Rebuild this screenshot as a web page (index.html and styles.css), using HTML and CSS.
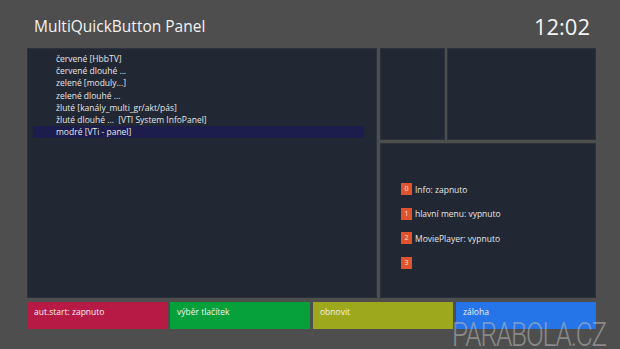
FILE: index.html
```html
<!DOCTYPE html>
<html lang="cs">
<head>
    <meta charset="UTF-8">
    <title>MultiQuickButton Panel</title>
    <link rel="stylesheet" href="styles.css">
</head>
<body>
    <div class="screen">
        <div class="header">
            <div class="title">MultiQuickButton Panel</div>
            <div class="clock">12:02</div>
        </div>

        <div class="main">
            <div class="panel list-panel">
                <div class="item">červené [HbbTV]</div>
                <div class="item">červené dlouhé ...</div>
                <div class="item">zelené [moduly...]</div>
                <div class="item">zelené dlouhé ...</div>
                <div class="item">žluté [kanály_multi_gr/akt/pás]</div>
                <div class="item">žluté dlouhé ...&nbsp; [VTI System InfoPanel]</div>
                <div class="item selected">modré [VTi - panel]</div>
            </div>

            <div class="side">
                <div class="side-top">
                    <div class="panel"></div>
                    <div class="panel"></div>
                </div>
                <div class="panel info-panel">
                    <div class="info-row"><span class="badge">0</span>Info: zapnuto</div>
                    <div class="info-row"><span class="badge">1</span>hlavní menu: vypnuto</div>
                    <div class="info-row"><span class="badge">2</span>MoviePlayer: vypnuto</div>
                    <div class="info-row"><span class="badge">3</span></div>
                </div>
            </div>
        </div>

        <div class="buttons">
            <div class="btn red">aut.start: zapnuto</div>
            <div class="btn green">výběr tlačítek</div>
            <div class="btn yellow">obnovit</div>
            <div class="btn blue">záloha</div>
        </div>

        <div class="watermark">PARABOLA.CZ</div>
    </div>
</body>
</html>
```

FILE: styles.css
```css
body {
    margin: 0;
    background-color: #4e4e4e;
    font-family: "Open Sans", "DejaVu Sans", sans-serif;
    color: #e6e6e6;
}

.screen {
    position: relative;
    width: 620px;
    height: 349px;
    padding: 0 24px 0 27px;
    box-sizing: border-box;
    overflow: hidden;
}

.header {
    height: 48px;
    display: flex;
    justify-content: space-between;
    align-items: center;
    padding: 3px 6px 0 7px;
    box-sizing: border-box;
}

.title {
    font-size: 15.5px;
    color: #f2f2f2;
}

.clock {
    font-size: 22px;
    color: #f4f4f4;
}

.main {
    display: grid;
    grid-template-columns: 350px 1fr;
    gap: 3px;
    height: 250px;
}

.panel {
    background-color: #212733;
    box-shadow: inset 0 0 0 1px #2b313d;
}

.list-panel {
    padding-top: 5px;
}

.item {
    font-size: 8.5px;
    line-height: 12.2px;
    padding-left: 29px;
}

.item.selected {
    margin: 0 13px 0 6px;
    padding-left: 23px;
    background-color: #1c1d4c;
}

.side {
    display: grid;
    grid-template-rows: 92px 1fr;
    gap: 3px;
}

.side-top {
    display: grid;
    grid-template-columns: 65px 1fr;
    gap: 2px;
}

.info-panel {
    padding: 34px 0 0 21px;
}

.info-row {
    display: flex;
    align-items: center;
    height: 24.5px;
    font-size: 8.5px;
}

.badge {
    width: 11px;
    height: 12px;
    margin-right: 3px;
    background-color: #e0532c;
    color: #f5e6e0;
    font-size: 7px;
    text-align: center;
    line-height: 12px;
}

.buttons {
    display: grid;
    grid-template-columns: repeat(4, 1fr);
    gap: 3px;
    margin-top: 4px;
    height: 27px;
}

.btn {
    font-size: 8.5px;
    padding: 4px 0 0 7px;
    color: #f2f2f2;
}

.red { background-color: #b71b45; }
.green { background-color: #07a13c; }
.yellow { background-color: #9ea81d; }
.blue { background-color: #2574e8; }

.watermark {
    position: absolute;
    left: 452px;
    top: 314px;
    font-family: "Roboto", sans-serif;
    font-weight: 300;
    font-size: 34px;
    letter-spacing: -1.5px;
    color: rgba(190, 190, 190, 0.55);
    transform: scaleX(0.77);
    transform-origin: left top;
}
```
